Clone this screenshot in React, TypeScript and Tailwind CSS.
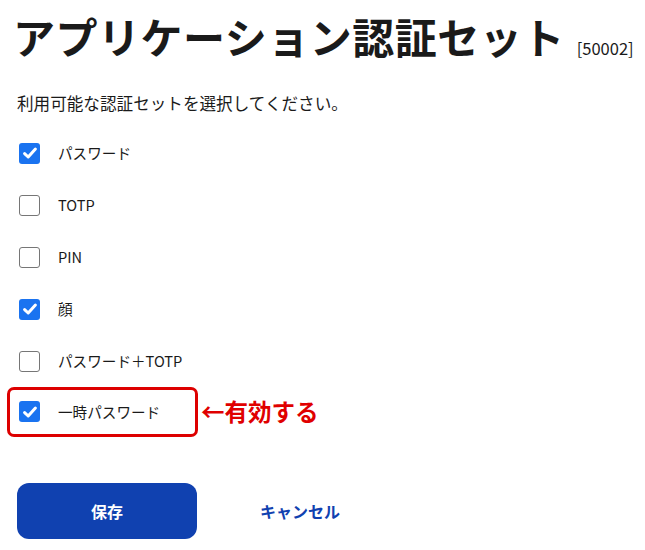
import React, { useState } from "react";

const font = { fontFamily: '"Noto Sans CJK JP", "Noto Sans", sans-serif' };

const options = [
  { label: "パスワード", checked: true },
  { label: "TOTP", checked: false },
  { label: "PIN", checked: false },
  { label: "顔", checked: true },
  { label: "パスワード＋TOTP", checked: false },
  { label: "一時パスワード", checked: true, highlight: true },
];

const Box = ({ checked }: { checked: boolean }) =>
  checked ? (
    <span className="flex h-[21px] w-[21px] items-center justify-center rounded-[3px] bg-[#1a73f0]">
      <svg viewBox="0 0 16 16" className="h-[16px] w-[16px]">
        <path d="M2.6 8.6 L6.2 12 L13.4 4" fill="none" stroke="white" strokeWidth="3" strokeLinecap="round" strokeLinejoin="round" />
      </svg>
    </span>
  ) : (
    <span className="h-[21px] w-[21px] rounded-[3px] border-[1.5px] border-[#767676] bg-white" />
  );

export default function App() {
  const [items, setItems] = useState(options);
  const toggle = (i: number) =>
    setItems(items.map((it, j) => (j === i ? { ...it, checked: !it.checked } : it)));

  return (
    <div className="h-[550px] w-[645px] bg-white text-[#1a1a1a]" style={font}>
      <div className="flex items-end pl-[13px] pt-[6px]">
        <h1 className="text-[42px] font-bold leading-[60px] tracking-[0.5px]">アプリケーション認証セット</h1>
        <span className="mb-[10px] ml-[12px] text-[16.5px] leading-none">[50002]</span>
      </div>
      <p className="mt-[27px] pl-[17px] text-[16.6px] leading-[20px]">利用可能な認証セットを選択してください。</p>
      <div className="mt-[14px] flex flex-col">
        {items.map((it, i) => {
          const row = (
            <button
              onClick={() => toggle(i)}
              className="flex h-[52px] items-center gap-[18px] pl-[19px] text-left text-[14.6px]"
            >
              <Box checked={it.checked} />
              <span>{it.label}</span>
            </button>
          );
          if (!it.highlight) return <div key={i}>{row}</div>;
          return (
            <div key={i} className="flex items-center">
              <div className="ml-[7px] flex h-[50px] w-[191px] items-center rounded-[7px] border-[3px] border-[#dd0000]">
                <button
                  onClick={() => toggle(i)}
                  className="flex items-center gap-[18px] pl-[9px] text-left text-[14.6px]"
                >
                  <Box checked={it.checked} />
                  <span>{it.label}</span>
                </button>
              </div>
              <span className="ml-[3px] text-[23.5px] font-bold text-[#e00000]">←有効する</span>
            </div>
          );
        })}
      </div>
      <div className="mt-[46px] flex items-center pl-[17px]">
        <button className="h-[56px] w-[180px] rounded-[12px] bg-[#1041b0] text-[16px] font-bold text-white">保存</button>
        <button className="ml-[63px] text-[16px] font-bold text-[#1041b0]">キャンセル</button>
      </div>
    </div>
  );
}
